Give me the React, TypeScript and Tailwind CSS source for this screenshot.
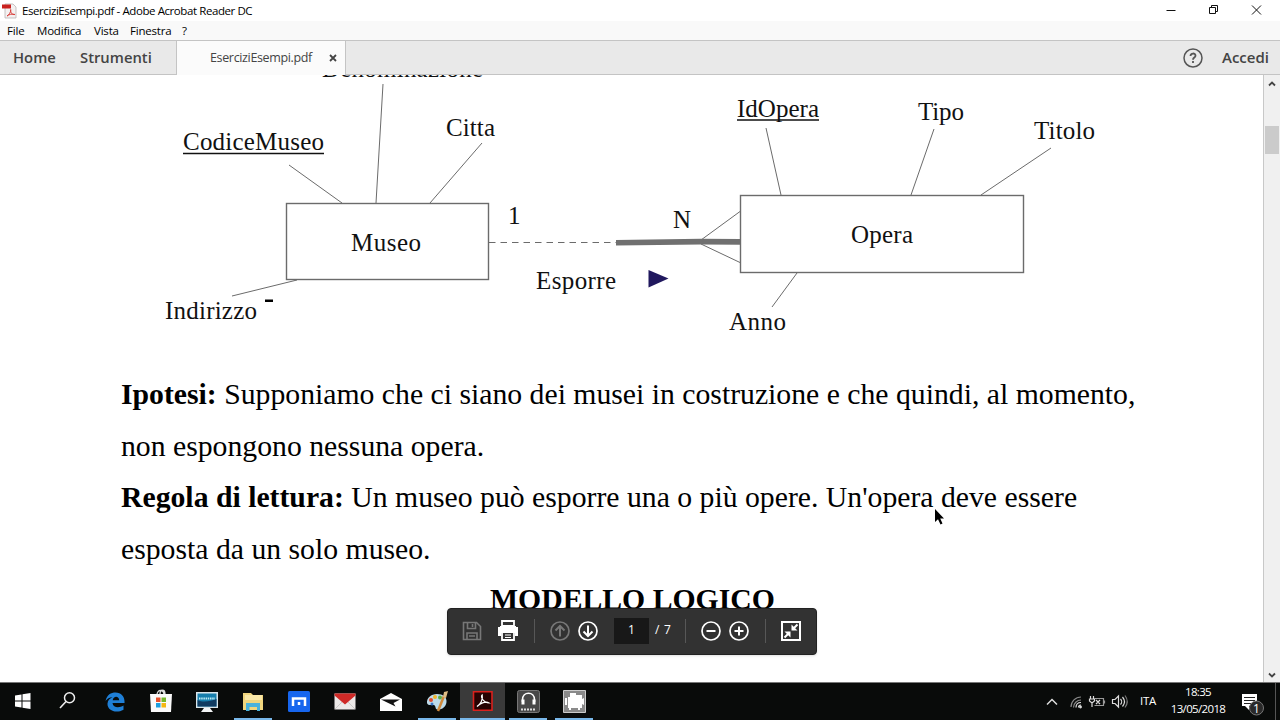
import type { ReactNode } from 'react';

const menuItems = [
  { label: 'File', className: 'w-[30px]' },
  { label: 'Modifica', className: 'w-[57px]' },
  { label: 'Vista', className: 'w-[36px]' },
  { label: 'Finestra', className: 'w-[52px]' },
  { label: '?', className: '' },
];

// x, baseline, width
const labels = [
  { text: 'Denominazione', x: 322, y: 77, w: 161 },
  { text: 'CodiceMuseo', x: 183, y: 150, w: 141, underline: true },
  { text: 'Citta', x: 446, y: 136, w: 49 },
  { text: 'Museo', x: 351, y: 250.5, w: 70 },
  { text: 'Indirizzo', x: 165, y: 319, w: 92 },
  { text: '1', x: 508, y: 224, w: 12 },
  { text: 'N', x: 673, y: 227.5, w: 19 },
  { text: 'Esporre', x: 536, y: 288.5, w: 80 },
  { text: 'IdOpera', x: 737, y: 116.5, w: 82, underline: true },
  { text: 'Tipo', x: 918, y: 119.5, w: 46 },
  { text: 'Titolo', x: 1034, y: 138.5, w: 61 },
  { text: 'Opera', x: 851, y: 242.5, w: 62 },
  { text: 'Anno', x: 729, y: 330, w: 57 },
];

function TitleBar() {
  return (
    <header className="flex h-[21px] shrink-0 items-center bg-white">
      <svg className="ml-[2px] h-4 w-4" viewBox="0 0 16 16">
        <path d="M3 1h8l3 3v11H3z" fill="#f4f1f1" stroke="#b9b4b4" strokeWidth=".8" />
        <path d="M0 1.5h9v4H0z" fill="#c9211e" />
        <path d="M5 13c2-1 4-4 3.700-6.500C8.500 10 10 12 13 11.500 10 10.500 7 11.500 5 13z" fill="none" stroke="#d8403c" />
      </svg>
      <span className="ml-1 text-[11.500px] tracking-[-0.42px] whitespace-nowrap text-black">
        EserciziEsempi.pdf - Adobe Acrobat Reader DC
      </span>
      <svg className="ml-auto h-[21px] w-[120px]" viewBox="1160 0 120 21" fill="none" stroke="#111" strokeWidth="1">
        <path d="M1166.500 10.500h9" />
        <path d="M1209.500 7.500h6v6h-6zM1211.500 7.500v-2h6v6h-2" />
        <path d="M1252 5.500l9 9M1261 5.500l-9 9" />
      </svg>
    </header>
  );
}

function MenuBar() {
  return (
    <nav className="flex h-[19px] shrink-0 items-center bg-[#f9f9f9] pl-[7px] text-[11.500px] tracking-[-0.2px] text-black">
      {menuItems.map((item) => (
        <span key={item.label} className={item.className}>
          {item.label}
        </span>
      ))}
    </nav>
  );
}

function TabBar() {
  return (
    <div className="flex h-[35px] shrink-0 border-y border-[#c4c4c4] bg-[#e9e9e9] text-[#444]">
      <div className="flex w-[177px] items-center border-r border-[#c4c4c4] pl-[13px] text-[14.800px] font-semibold">
        <span className="w-[67px]">Home</span>
        <span>Strumenti</span>
      </div>
      <div className="-mb-px flex w-[169px] items-center border-r border-[#c4c4c4] bg-[#fbfbfb] pl-[33px]">
        <span className="w-[119px] text-[12.500px] tracking-[-0.35px]">EserciziEsempi.pdf</span>
        <svg className="h-2 w-2" viewBox="0 0 8 8" stroke="#444" strokeWidth="1.800">
          <path d="M1 1l6 6M7 1L1 7" />
        </svg>
      </div>
      <div className="ml-auto flex items-center">
        <svg className="h-5 w-5" viewBox="0 0 20 20" fill="none" stroke="#555" strokeWidth="1.500">
          <circle cx="10" cy="10" r="9" />
          <path d="M7.500 8c0-3.300 5-3.200 5-.3 0 2-2.500 1.800-2.500 4" strokeWidth="1.800" />
          <path d="M10 13v2" strokeWidth="1.800" />
        </svg>
        <span className="ml-[19px] w-[58px] text-[15px] font-semibold">Accedi</span>
      </div>
    </div>
  );
}

function Diagram() {
  return (
    <svg className="block h-[281px] w-[1263px]" viewBox="0 75 1263 281">
      <g fill="none" stroke="#6b6b6b" strokeWidth="1">
        <rect x="286.500" y="203.500" width="202" height="76" strokeWidth="1.400" />
        <rect x="740.500" y="195.500" width="283" height="77" strokeWidth="1.400" />
        <path d="M289 165L342 203M383 84L376 203M482 143L430 203M232 296L297 280" />
        <path d="M766 128L781 195M934 129L911 195M1051 148L981 195M797 273L772 307" />
        <path d="M701 240L740 211.500M701 244L740 262.500" />
        <path d="M489 242.500H616" strokeDasharray="6.500 5" />
      </g>
      <path d="M616 240L701 238.700 740 239V244.800L701 244.500 616 245.500z" fill="#707070" />
      <path d="M648.500 270L668.500 278.500 648.500 287.500z" fill="#20185e" />
      <path d="M265 299.500h8v2.500h-8z" fill="#000" />
      <g fill="#111" fontFamily="'Liberation Serif', serif" fontSize="25">
        {labels.map((l) => (
          <text key={l.text} x={l.x} y={l.y} textLength={l.w}>
            {l.text}
          </text>
        ))}
      </g>
      <g stroke="#111" strokeWidth="1.500">
        {labels
          .filter((l) => l.underline)
          .map((l) => (
            <path key={l.text} d={`M${l.x} ${l.y + 3.5}h${l.w}`} />
          ))}
      </g>
    </svg>
  );
}

function Separator() {
  return <span className="h-6 w-px bg-[#575757]" />;
}

function ReaderToolbar() {
  return (
    <div className="absolute top-[532.500px] left-[447px] flex h-[47px] w-[370px] items-center rounded-[4px] border border-[#222] bg-[#323232] text-white shadow">
      <svg className="ml-[14px] h-5 w-5" viewBox="0 0 20 20" fill="none" stroke="#777" strokeWidth="1.600">
        <path d="M1.500 1.500h13l4 4v13h-17z" />
        <path d="M5.500 1.500v6h8v-6M5 18v-6h10v6M10.500 3v3M7 15h6" />
      </svg>
      <svg className="ml-[15px] h-[22px] w-[22px]" viewBox="0 0 22 22">
        <path d="M5 1h12v5H5z" fill="none" stroke="#fff" strokeWidth="1.800" />
        <path d="M1 7h2V6h16v1h2v9h-3v-3H4v3H1z" fill="#fff" />
        <path d="M5 12h12v8H5z" fill="#323232" stroke="#fff" strokeWidth="1.800" />
        <path d="M8 15h6M8 17.500h6" stroke="#fff" />
      </svg>
      <span className="w-[15px]" />
      <Separator />
      <svg className="ml-[15px] h-5 w-5" viewBox="0 0 20 20" fill="none" stroke="#777" strokeWidth="1.700">
        <circle cx="10" cy="10" r="9" />
        <path d="M10 15.500V5M5.500 9.500L10 5l4.500 4.500" strokeWidth="2" />
      </svg>
      <svg className="ml-2 h-5 w-5" viewBox="0 0 20 20" fill="none" stroke="#fff" strokeWidth="1.700">
        <circle cx="10" cy="10" r="9" />
        <path d="M10 4.500V15M5.500 10.500L10 15l4.500-4.500" strokeWidth="2" />
      </svg>
      <span className="ml-[16px] flex h-[26px] w-[35px] items-center justify-center bg-[#181818] pb-[2px] text-[12px]">1</span>
      <span className="ml-[6px] w-[30px] pb-[2px] text-[12px] tracking-[0.8px] whitespace-nowrap">/ 7</span>
      <Separator />
      <svg className="ml-[15px] h-5 w-5" viewBox="0 0 20 20" fill="none" stroke="#fff" strokeWidth="1.700">
        <circle cx="10" cy="10" r="9" />
        <path d="M5.500 10h9" strokeWidth="2" />
      </svg>
      <svg className="ml-2 h-5 w-5" viewBox="0 0 20 20" fill="none" stroke="#fff" strokeWidth="1.700">
        <circle cx="10" cy="10" r="9" />
        <path d="M5.500 10h9M10 5.500v9" strokeWidth="2" />
      </svg>
      <span className="w-[16px]" />
      <Separator />
      <svg className="ml-[15px] h-5 w-5" viewBox="0 0 20 20">
        <path d="M1 1h18v18H1z" fill="none" stroke="#fff" strokeWidth="2" />
        <path d="M10.500 3.500v6h6zM9.500 16.500v-6h-6z" fill="#fff" />
        <path d="M11.500 8.500l5-5M8.500 11.500l-5 5" stroke="#fff" strokeWidth="2" />
      </svg>
    </div>
  );
}

function Document() {
  return (
    <main className="relative w-[1263px] shrink-0 overflow-hidden bg-white text-black">
      <Diagram />
      <div className="mt-[13px] ml-[121px] font-['Liberation_Serif',serif] text-[29.730px] leading-[51.600px] whitespace-nowrap">
        <p>
          <b>Ipotesi:</b> Supponiamo che ci siano dei musei in costruzione e che quindi, al momento,
        </p>
        <p>non espongono nessuna opera.</p>
        <p>
          <b>Regola di lettura:</b> Un museo può esporre una o più opere. Un'opera deve essere
        </p>
        <p>esposta da un solo museo.</p>
        <h1 className="-mt-[1px] ml-[369px] font-bold">MODELLO LOGICO</h1>
      </div>
      <ReaderToolbar />
      <svg className="absolute top-[433px] left-[934px] h-[20px] w-[12px]" viewBox="0 0 12 20">
        <path d="M1 1v13l3-2.800 2.500 5.300 2-1L6.200 10.500H10z" fill="#000" />
      </svg>
    </main>
  );
}

function ScrollBar() {
  return (
    <aside className="flex flex-1 flex-col items-center border-l border-[#c8c8c8] bg-[#f0f0f0]">
      <svg className="mt-[5px] h-2 w-2" viewBox="0 0 8 8" fill="none" stroke="#444" strokeWidth="1.800">
        <path d="M1 5.500l3-3 3 3" />
      </svg>
      <div className="mt-[38px] h-[28px] w-[14px] bg-[#cbcbcb]" />
      <svg className="mt-auto mb-[3px] h-2 w-2" viewBox="0 0 8 8" fill="none" stroke="#444" strokeWidth="1.800">
        <path d="M1 2.500l3 3 3-3" />
      </svg>
    </aside>
  );
}

function TaskItem({ width, active, open, children }: { width: string; active?: boolean; open?: string; children: ReactNode }) {
  return (
    <div className={`flex h-full flex-col items-center ${width} ${active ? 'bg-[#3a3a3a]' : ''}`}>
      <svg className="mt-[6px] h-6 w-6" viewBox="0 0 24 24">
        {children}
      </svg>
      {open && <span className={`mt-auto h-[2px] bg-[#79b8ea] ${open}`} />}
    </div>
  );
}

function TaskBar() {
  return (
    <footer className="flex h-[38px] shrink-0 border-t border-[#777] bg-[#090b0a] text-white">
      <TaskItem width="w-[45px]">
        <path d="M4 6.500l6.500-1v6H4zM11.500 5.300L19.500 4v7.500h-8zM4 12.500h6.500v6L4 17.500zM11.500 12.500h8V20l-8-1.200z" fill="#fff" />
      </TaskItem>
      <TaskItem width="w-[46px]">
        <circle cx="13.500" cy="8.700" r="5" fill="none" stroke="#eee" strokeWidth="1.500" />
        <path d="M10 12.500L4 19" stroke="#eee" strokeWidth="1.600" />
      </TaskItem>
      <TaskItem width="w-[48px]">
        <path d="M2.500 12C4 5.500 8 3.500 12.500 3.500c6 0 9.500 4.500 9 10.500H9.500c.5 5 7 5.200 11 2.500v4.200C13 25 4 21.500 4.500 14.500 4.700 11.500 7 9.300 9.500 8.300 6.500 8.300 4.200 9.800 2.500 12zM9.700 11.300h6.500c0-4.800-6-4.800-6.500 0z" fill="#1f7fd6" fillRule="evenodd" />
      </TaskItem>
      <TaskItem width="w-[44px]">
        <path d="M8 6c0-6 7-6 7 0M11 5c0-5 5-5 5 0" fill="none" stroke="#ddd" strokeWidth="1.300" />
        <path d="M1 5h22l-1 18H2z" fill="#fafafa" />
        <path d="M7 8.500h4.500V13H7z" fill="#e8502c" />
        <path d="M12.500 8.500H17V13h-4.500z" fill="#75b82b" />
        <path d="M7 14h4.500v4.500H7z" fill="#1a9fe0" />
        <path d="M12.500 14H17v4.500h-4.500z" fill="#f5b814" />
      </TaskItem>
      <TaskItem width="w-[47px]">
        <path d="M1 3h22v16H1z" fill="#dbe5ea" />
        <path d="M2.500 4.500h19v13h-19z" fill="#167eac" />
        <path d="M2.500 11c6 3 13 1 19-1v7.500h-19z" fill="#103b61" />
        <path d="M4 9.500h16" stroke="#bcecf5" strokeWidth="2" strokeDasharray="1.500 .7" />
        <path d="M9 19h6l3 4H6z" fill="#f3f5f6" />
      </TaskItem>
      <TaskItem width="w-[46px]" open="w-[38px]">
        <path d="M2 4h8l2 2h10v15H2z" fill="#f0d57d" />
        <path d="M4 6h17v5H4z" fill="#fae8a8" />
        <path d="M5 22v-8h14v8h-3v-4H8.500v4z" fill="#4ab2dc" />
      </TaskItem>
      <TaskItem width="w-[46px]">
        <rect x="1" y="2" width="22" height="21" rx="1.500" fill="#1766ee" />
        <path d="M6 17V9.500h12V17M12 16v-3" fill="none" stroke="#fff" strokeWidth="2.500" />
      </TaskItem>
      <TaskItem width="w-[46px]">
        <path d="M1.500 4.500h21v16h-21z" fill="#ece9e8" />
        <path d="M1.500 4.500h21v2L12 15.500 1.500 6.500z" fill="#cf2a27" />
        <path d="M2 20l7-7M22 20l-7-7" stroke="#bbb" strokeWidth=".7" />
      </TaskItem>
      <TaskItem width="w-[46px]">
        <path d="M1 10L12 4l11 6v12H1z" fill="#fff" />
        <path d="M2 10.500h19l-6.500 3.500 2 3.500z" fill="#111" />
      </TaskItem>
      <TaskItem width="w-[46px]" open="w-[38px]">
        <path d="M12 5c6 0 10 3 9.500 8-.5 5-5 8-9 7.500-3-.5-1-4-4-4.500-3 0-6 .5-6.500-2C1.500 9 6 5 12 5z" fill="#bddbea" />
        <circle cx="6" cy="11" r="2" fill="#e04a2b" />
        <circle cx="10" cy="8" r="2" fill="#f0b62b" />
        <circle cx="15" cy="8.500" r="2" fill="#5bab45" />
        <circle cx="7" cy="15" r="1.500" fill="#3974c5" />
        <path d="M13 22l6-15" stroke="#d08a3c" strokeWidth="2.500" />
        <path d="M18 8l1-5 4-1-2 7z" fill="#dfbd85" />
      </TaskItem>
      <TaskItem width="w-[45px]" active open="w-full">
        <path d="M2.500 2.800h18.500v18.500H2.500z" fill="#260303" stroke="#d9211d" strokeWidth="1.600" />
        <path d="M6 17.500c3-1.500 6.500-7 5.200-11.500-2 2 1.500 8 6.800 8-3-2-8.500 0-12 3.500z" fill="none" stroke="#fff" strokeWidth="1.200" />
      </TaskItem>
      <TaskItem width="w-[46px]" open="w-[38px]">
        <rect x="1.500" y="1.500" width="22" height="22" rx="2" fill="#484848" stroke="#777" />
        <path d="M6.500 13v-2c0-9 12-9 12 0v2" fill="none" stroke="#fff" strokeWidth="1.600" />
        <path d="M5.500 10.500h3v5h-3zM16.500 10.500h3v5h-3z" fill="#fff" />
        <path d="M5 20.500h15" stroke="#ddd" strokeWidth="2" strokeDasharray="2 1" />
      </TaskItem>
      <TaskItem width="w-[46px]" open="w-[38px]">
        <path d="M1.500 1.500h22v22h-22z" fill="#8a8a8a" stroke="#ccc" />
        <path d="M8 4h6v2h6v13h-2v2h-2v-2H9v2H7v-2H6V8h2zM3 9h2v7H3zM20 10l2-1v7l-2-1z" fill="#fff" />
      </TaskItem>
      <div className="ml-auto flex items-center">
        <svg className="h-[37px] w-[90px]" viewBox="1042 683 90 37" fill="none" stroke="#ddd" strokeWidth="1.200">
          <path d="M1047 704.500l5-5 5 5" strokeWidth="1.500" />
          <path d="M1071 707c0-5.500 4.500-10 10-10M1073.500 707.500c0-4 3.500-7.500 7.500-7.500" stroke="#888" />
          <path d="M1076 707.500c0-3 2-5 5-5M1078.500 707.500c0-1.500 1-2.500 2.500-2.500" />
          <circle cx="1080.500" cy="707" r=".8" fill="#eee" />
          <path d="M1094.500 698.500h9v7h-9M1104.500 700.500v3" stroke="#999" />
          <path d="M1090.500 696v3M1093.500 696v3M1089.500 699h5v2l-2.500 2-2.500-2zM1092 703v4M1096 700l4 4M1100 700l-4 4" />
          <path d="M1112.500 699.500h2.500l3.500-3.500v11l-3.500-3.500h-2.500zM1120.500 699c1.500 1.500 1.500 4 0 5.500M1122.500 697c2.500 3 2.500 6.500 0 9.500" />
          <path d="M1125 695.500c3 4 3 8 0 12" stroke="#777" />
        </svg>
        <span className="mb-[2px] ml-[8px] w-[30px] text-[11.500px] tracking-[-0.3px]">ITA</span>
        <span className="mb-[3px] flex w-[56px] flex-col items-center text-[11.500px] leading-[17px] tracking-[-0.65px] whitespace-nowrap">
          <span>18:35</span>
          <span>13/05/2018</span>
        </span>
        <svg className="h-[37px] w-[54px]" viewBox="1226 683 54 37">
          <path d="M1242 694h15v12h-8v4l-4-4h-3z" fill="#fff" />
          <path d="M1244 697.500h11M1244 700.500h11M1244 703.500h7" stroke="#222" />
          <circle cx="1256.500" cy="708" r="7" fill="#292929" stroke="#777" />
          <text x="1253" y="712.500" fontSize="12" fill="#fff">
            1
          </text>
          <path d="M1275.500 683v37" stroke="#555" />
        </svg>
      </div>
    </footer>
  );
}

export default function App() {
  return (
    <div className="flex h-[720px] w-[1280px] flex-col overflow-hidden bg-white font-['Open_Sans',sans-serif]">
      <TitleBar />
      <MenuBar />
      <TabBar />
      <div className="flex min-h-0 flex-1">
        <Document />
        <ScrollBar />
      </div>
      <TaskBar />
    </div>
  );
}
